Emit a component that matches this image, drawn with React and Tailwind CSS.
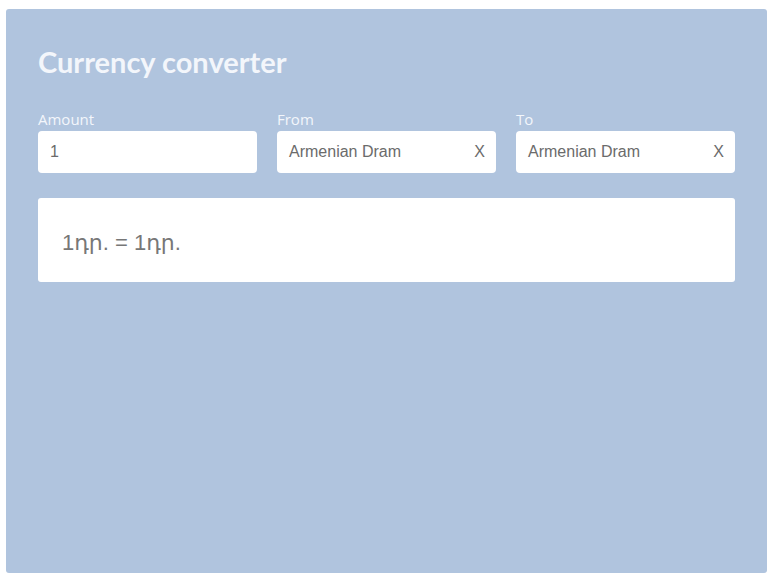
export default function App() {
  const field = "h-[42px] w-full rounded-[4px] bg-white flex items-center px-3 text-[16px] text-[#6b6b6b]";
  const label = "text-[15px] leading-[18px] mb-[3px] text-[#f3f6fb]";
  return (
    <div className="w-[774px] h-[580px] bg-white pt-[9px] pl-[6px]" style={{ fontFamily: '"Liberation Sans", "DejaVu Sans", sans-serif' }}>
      <div className="w-[761px] h-[564px] bg-[#b0c4de] rounded-[3px] px-[32px] pt-[35px]">
        <h1 className="text-[29px] leading-[36px] font-bold text-[#f3f6fb]" style={{ fontFamily: 'Lato, "Open Sans", sans-serif' }}>Currency converter</h1>
        <div className="grid grid-cols-3 gap-[20px] mt-[30px] w-[697px]">
          <div className="flex flex-col">
            <label className={label} style={{ fontFamily: '"Open Sans", sans-serif' }}>Amount</label>
            <div className={field}>1</div>
          </div>
          <div className="flex flex-col">
            <label className={label} style={{ fontFamily: '"Open Sans", sans-serif' }}>From</label>
            <div className={field + " justify-between"}><span>Armenian Dram</span><span className="mr-[-1px]">X</span></div>
          </div>
          <div className="flex flex-col">
            <label className={label} style={{ fontFamily: '"Open Sans", sans-serif' }}>To</label>
            <div className={field + " justify-between"}><span>Armenian Dram</span><span className="mr-[-1px]">X</span></div>
          </div>
        </div>
        <div className="mt-[25px] w-[697px] h-[84px] bg-white rounded-[3px] flex items-center px-[24px] pt-[4px] text-[22px] text-[#777]">
          1դր. = 1դր.
        </div>
      </div>
    </div>
  );
}
